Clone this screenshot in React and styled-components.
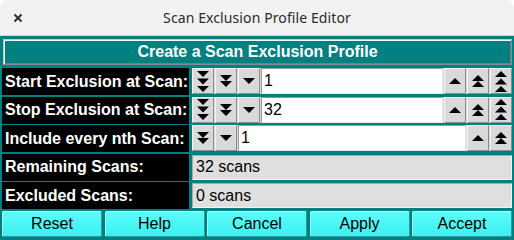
import React from "react";
import styled, { createGlobalStyle } from "styled-components";

const Global = createGlobalStyle`
  html, body { margin: 0; padding: 0; background: #ffffff; }
  #root { width: 514px; height: 240px; }
`;

const Window = styled.div`
  width: 514px;
  height: 240px;
  display: flex;
  flex-direction: column;
  overflow: hidden;
  border-radius: 8px 8px 0 0;
  font-family: "Liberation Sans", Arial, sans-serif;
`;

const TitleBar = styled.div`
  height: 35px;
  flex: 0 0 35px;
  background: #f2f2f2;
  border-bottom: 1px solid #d4d4d4;
  display: flex;
  align-items: center;
  position: relative;
  justify-content: center;
`;

const CloseBtn = styled.div`
  position: absolute;
  left: 13px;
  top: 13px;
  width: 10px;
  height: 10px;
  display: flex;
`;

const Title = styled.div`
  font-family: "Noto Sans", "DejaVu Sans", sans-serif;
  font-size: 14px;
  color: #2a2a2a;
  letter-spacing: 0.1px;
`;

const Body = styled.div`
  flex: 1;
  background: #008080;
  padding: 3px 2px 3px 2px;
  display: flex;
  flex-direction: column;
`;

const Header = styled.div`
  height: 26px;
  box-sizing: border-box;
  border: 1px solid;
  border-color: #c8c8c8 #8a8a8a #8a8a8a #c8c8c8;
  box-shadow: inset 1px 1px 0 #ffffff, inset -1px -1px 0 #7a7a7a;
  color: #ffffff;
  font-weight: bold;
  font-size: 16px;
  display: flex;
  align-items: center;
  justify-content: center;
  margin-left: 1px;
`;

const Grid = styled.div`
  margin-top: 3px;
  display: grid;
  grid-template-columns: 187px 1fr;
  grid-template-rows: repeat(5, 27px);
  column-gap: 3px;
  row-gap: 1.5px;
`;

const Label = styled.div`
  background: #000000;
  color: #ffffff;
  font-weight: bold;
  font-size: 16px;
  display: flex;
  align-items: center;
  padding-left: 3px;
  white-space: nowrap;
`;

const Controls = styled.div`
  display: flex;
  gap: 1px;
  background: #d9d9d9;
  height: 26px;
`;

const SpinBtn = styled.div`
  width: 22px;
  flex: 0 0 22px;
  box-sizing: border-box;
  background: #d9d9d9;
  border: 1px solid;
  border-color: #f4f4f4 #8c8c8c #8c8c8c #f4f4f4;
  display: flex;
  align-items: center;
  justify-content: center;
`;

const Entry = styled.div`
  flex: 1;
  box-sizing: border-box;
  background: #ffffff;
  border: 1px solid;
  border-color: #9a9a9a #e6e6e6 #e6e6e6 #9a9a9a;
  font-size: 16px;
  color: #000;
  display: flex;
  align-items: center;
  padding-left: 2px;
`;

const Info = styled.div`
  box-sizing: border-box;
  background: #dfdfdf;
  border: 1px solid;
  border-color: #a8a8a8 #f2f2f2 #f2f2f2 #a8a8a8;
  margin: 1px 0;
  font-size: 16px;
  color: #000;
  display: flex;
  align-items: center;
  padding-left: 3px;
`;

const ButtonRow = styled.div`
  margin-top: 2px;
  display: grid;
  grid-template-columns: repeat(5, 1fr);
  column-gap: 2.5px;
  height: 26px;
`;

const ActionBtn = styled.div`
  box-sizing: border-box;
  background: linear-gradient(to bottom, #5afcfc, #3ef0f0);
  border: 1px solid;
  border-color: #b4ffff #2b9c9c #2b9c9c #b4ffff;
  border-radius: 2px;
  font-size: 16px;
  color: #000;
  display: flex;
  align-items: center;
  justify-content: center;
`;

const tri = (y, h, up) =>
  up ? `0,${y + h} 12,${y + h} 6,${y}` : `0,${y} 12,${y} 6,${y + h}`;

const Arrow = ({ count, up }) => {
  let ys, h, H;
  if (count === 1) { ys = [0]; h = 6; H = 6; }
  else if (count === 2) { ys = [0, 6]; h = 6; H = 12; }
  else { ys = [0, 7.5, 15]; h = 6; H = 21; }
  return (
    <svg width="12" height={H} viewBox={`0 0 12 ${H}`}>
      {ys.map((y, i) => (
        <polygon key={i} points={tri(y, h, up)} fill="#000" />
      ))}
    </svg>
  );
};

const SpinRow = ({ value, levels }) => (
  <Controls>
    {levels.slice().reverse().map((n) => (
      <SpinBtn key={"d" + n}><Arrow count={n} /></SpinBtn>
    ))}
    <Entry>{value}</Entry>
    {levels.map((n) => (
      <SpinBtn key={"u" + n}><Arrow count={n} up /></SpinBtn>
    ))}
  </Controls>
);

export default function App() {
  return (
    <>
      <Global />
      <Window>
        <TitleBar>
          <CloseBtn>
            <svg width="10" height="10" viewBox="0 0 10 10">
              <path d="M1.5 1.5 L8.5 8.5 M8.5 1.5 L1.5 8.5" stroke="#2e2e2e" strokeWidth="2" />
            </svg>
          </CloseBtn>
          <Title>Scan Exclusion Profile Editor</Title>
        </TitleBar>
        <Body>
          <Header>Create a Scan Exclusion Profile</Header>
          <Grid>
            <Label>Start Exclusion at Scan:</Label>
            <SpinRow value="1" levels={[1, 2, 3]} />
            <Label>Stop Exclusion at Scan:</Label>
            <SpinRow value="32" levels={[1, 2, 3]} />
            <Label>Include every nth Scan:</Label>
            <SpinRow value="1" levels={[1, 2]} />
            <Label>Remaining Scans:</Label>
            <Info>32 scans</Info>
            <Label>Excluded Scans:</Label>
            <Info>0 scans</Info>
          </Grid>
          <ButtonRow>
            <ActionBtn>Reset</ActionBtn>
            <ActionBtn>Help</ActionBtn>
            <ActionBtn>Cancel</ActionBtn>
            <ActionBtn>Apply</ActionBtn>
            <ActionBtn>Accept</ActionBtn>
          </ButtonRow>
        </Body>
      </Window>
    </>
  );
}
